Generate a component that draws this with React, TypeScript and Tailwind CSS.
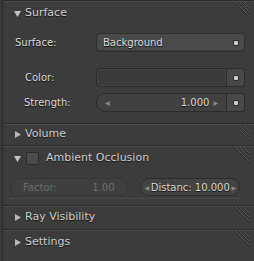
import { FC, ReactNode } from "react";

const Grip: FC = () => (
  <svg width="20" height="20" viewBox="0 0 20 20" className="absolute right-[4px] top-[1px]">
    {[0, 4, 8].map((o) => (
      <g key={o}>
        <line x1={4 + o} y1={0} x2={20} y2={16 - o} stroke="#2a2a2a" strokeWidth="1" />
        <line x1={5 + o} y1={0} x2={20} y2={15 - o} stroke="#555555" strokeWidth="1" />
      </g>
    ))}
  </svg>
);

const Arrow: FC<{ open?: boolean }> = ({ open }) => (
  <svg width="9" height="9" viewBox="0 0 9 9">
    {open ? <path d="M1 2h7l-3.5 6z" fill="#c4c4c4" /> : <path d="M2 1l6 3.5-6 3.5z" fill="#b8b8b8" />}
  </svg>
);

const Header: FC<{ open?: boolean; title: string; check?: boolean; h?: string }> = ({
  open,
  title,
  check,
  h = "h-[22px]",
}) => (
  <div className={`relative flex items-center ${h} border-t border-[#2b2b2b] shadow-[inset_0_1px_0_#4a4a4a] pl-[10px]`}>
    <Arrow open={open} />
    {check && (
      <span className="ml-[4px] mr-[4px] h-[13px] w-[13px] rounded-[2px] border border-[#2a2a2a] bg-[#4c4c4c]" />
    )}
    <span className="ml-[3px] text-[11px] text-[#d0d0d0] [text-shadow:0_1px_1px_rgba(0,0,0,0.7)]">{title}</span>
    <Grip />
  </div>
);

const Label: FC<{ children: ReactNode; cls?: string }> = ({ children, cls = "" }) => (
  <span className={`text-[10px] text-[#dcdcdc] [text-shadow:0_1px_1px_rgba(0,0,0,0.8)] ${cls}`}>{children}</span>
);

const Dot: FC = () => <span className="h-[4px] w-[4px] rounded-[1px] bg-[#cfcfcf] shadow-[0_0_0_1px_#2a2a2a]" />;

const App: FC = () => {
  return (
    <div className="flex h-[261px] w-[254px] bg-[#363636] font-['DejaVu_Sans',sans-serif]">
      <div className="w-[3px] border-r border-[#2a2a2a] bg-[#3a3a3a]" />
      <div className="flex flex-1 flex-col bg-[#3c3c3c]">
        {/* Surface */}
        <Header open title="Surface" h="h-[26px]" />
        <div className="flex h-[97px] flex-col pr-[9px]">
          <div className="mt-[7px] flex h-[19px] items-center">
            <Label cls="ml-[12px] w-[81px]">Surface:</Label>
            <div className="flex h-full flex-1 items-center justify-between rounded-[3px] border border-[#2e2e2e] bg-[#4a4a4a] pl-[6px] pr-[6px] shadow-[inset_0_-1px_0_#3a3a3a]">
              <Label>Background</Label>
              <Dot />
            </div>
          </div>
          <div className="mt-[16px] flex h-[19px] items-center">
            <Label cls="ml-[22px] w-[71px]">Color:</Label>
            <div className="flex h-full flex-1">
              <div className="flex-1 rounded-l-[3px] border border-[#2b2b2b] bg-[#3a3a3a] shadow-[inset_0_0_0_1px_#454545]" />
              <div className="flex w-[18px] items-center justify-center rounded-r-[3px] border border-l-0 border-[#2b2b2b] bg-[#484848]">
                <Dot />
              </div>
            </div>
          </div>
          <div className="mt-[6px] flex h-[19px] items-center">
            <Label cls="ml-[21px] w-[72px]">Strength:</Label>
            <div className="flex h-full flex-1">
              <div className="flex flex-1 items-center justify-between rounded-l-[9px] border border-[#2b2b2b] bg-[#414141] pl-[8px] pr-[8px]">
                <span className="text-[6px] text-[#8a8a8a]">◀</span>
                <div className="flex items-center gap-[4px]">
                  <Label>1.000</Label>
                  <span className="text-[6px] text-[#8a8a8a]">▶</span>
                </div>
              </div>
              <div className="flex w-[18px] items-center justify-center rounded-r-[3px] border border-l-0 border-[#2b2b2b] bg-[#484848]">
                <Dot />
              </div>
            </div>
          </div>
        </div>
        {/* Volume */}
        <Header title="Volume" />
        {/* Ambient Occlusion */}
        <Header open check title="Ambient Occlusion" h="h-[25px]" />
        <div className="flex h-[35px] flex-col pl-[7px] pr-[14px]">
          <div className="mt-[8px] flex h-[18px] gap-[12px]">
            <div className="flex flex-1 items-center justify-between rounded-[9px] border border-[#363636] bg-[#3f3f3f] pl-[12px] pr-[12px]">
              <span className="text-[10px] text-[#6e6e6e]">Factor:</span>
              <span className="text-[10px] text-[#6e6e6e]">1.00</span>
            </div>
            <div className="flex flex-1 items-center justify-between rounded-[9px] border border-[#2b2b2b] bg-[#434343] pl-[4px] pr-[3px]">
              <span className="text-[6px] text-[#8a8a8a]">◀</span>
              <Label>Distanc: 10.000</Label>
              <span className="text-[6px] text-[#8a8a8a]">▶</span>
            </div>
          </div>
          <div className="mt-[2px] h-[1px] bg-[#4a4a4a]" />
        </div>
        <Header title="Ray Visibility" h="h-[24px]" />
        <Header title="Settings" h="h-[26px]" />
        <div className="flex-1" />
      </div>
    </div>
  );
};

export default App;
